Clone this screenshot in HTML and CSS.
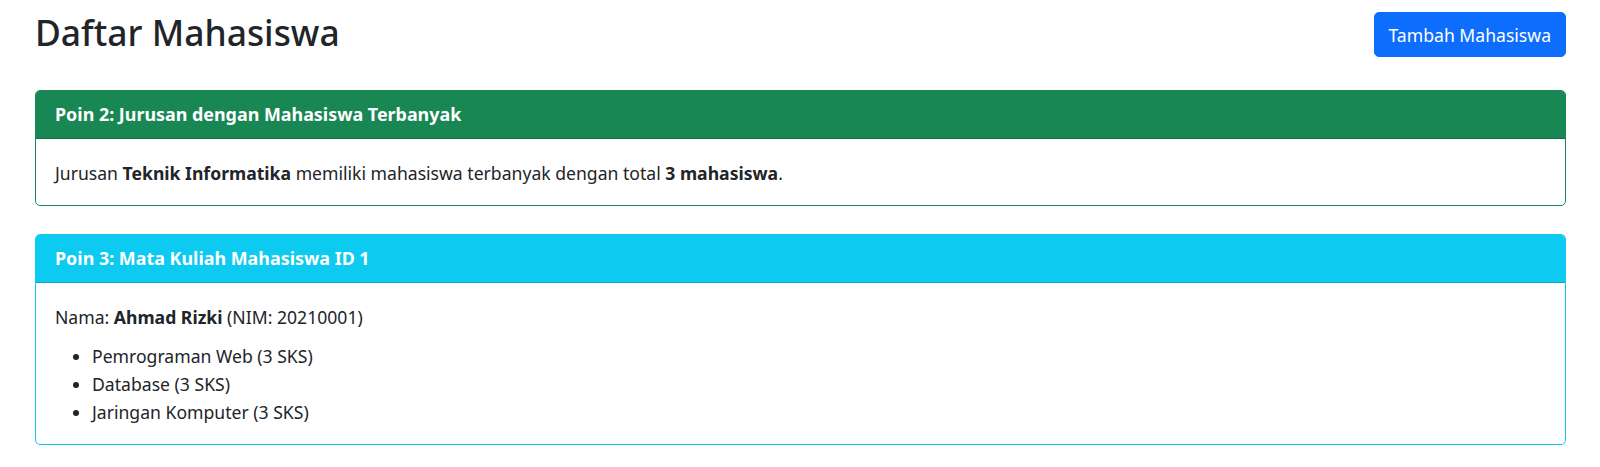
FILE: index.html
```html
<!DOCTYPE html>
<html lang="id">
<head>
    <meta charset="UTF-8">
    <meta name="viewport" content="width=device-width, initial-scale=1.0">
    <title>Daftar Mahasiswa</title>
    <link rel="stylesheet" href="styles.css">
</head>
<body>

<div class="container">
    <div class="topbar">
        <h2 class="page-title">Daftar Mahasiswa</h2>
        <button type="button" class="btn-primary">Tambah Mahasiswa</button>
    </div>

    <div class="card card-success">
        <div class="card-header">Poin 2: Jurusan dengan Mahasiswa Terbanyak</div>
        <div class="card-body">
            <p class="mb-0">Jurusan <strong>Teknik Informatika</strong> memiliki mahasiswa terbanyak dengan total <strong>3 mahasiswa</strong>.</p>
        </div>
    </div>

    <div class="card card-info">
        <div class="card-header">Poin 3: Mata Kuliah Mahasiswa ID 1</div>
        <div class="card-body">
            <p class="student">Nama: <strong>Ahmad Rizki</strong> (NIM: 20210001)</p>
            <ul class="course-list">
                <li>Pemrograman Web (3 SKS)</li>
                <li>Database (3 SKS)</li>
                <li>Jaringan Komputer (3 SKS)</li>
            </ul>
        </div>
    </div>
</div>

</body>
</html>
```
FILE: styles.css
```css
body {
    font-family: "Noto Sans", "Open Sans", sans-serif;
    font-size: 17.6px;
    line-height: 28px;
    color: #212529;
    background-color: #fff;
    margin: 0;
    padding: 0;
}
.container {
    padding: 0 34px 0 35px;
}
.topbar {
    display: flex;
    justify-content: space-between;
    align-items: center;
    height: 45px;
    margin-top: 12px;
    margin-bottom: 33px;
}
.page-title {
    font-size: 35.4px;
    font-weight: 500;
    line-height: 42px;
    margin: 0 0 6px;
}
.btn-primary {
    font-family: inherit;
    font-size: 17.6px;
    line-height: 28px;
    height: 45px;
    padding: 0 14px;
    color: #fff;
    background-color: #0d6efd;
    border: 1px solid #0d6efd;
    border-radius: 5px;
    cursor: pointer;
}
.btn-primary:hover {
    background-color: #0b5ed7;
}
.card {
    border: 1px solid;
    border-radius: 5px;
    margin-bottom: 28px;
    overflow: hidden;
    background-color: #fff;
}
.card-header {
    padding: 9px 19px;
    line-height: 29px;
    font-size: 17.9px;
    font-weight: 700;
    color: #fff;
    border-bottom: 1px solid rgba(0, 0, 0, 0.175);
}
.card-body {
    padding: 20px 19px 18px;
}
.card-success {
    border-color: #198754;
}
.card-success .card-header {
    background-color: #198754;
}
.card-info {
    border-color: #0dcaf0;
}
.card-info .card-header {
    background-color: #0dcaf0;
}
.mb-0 {
    margin: 0;
}
.student {
    margin: 0 0 11px;
}
.course-list {
    margin: 0;
    padding-left: 37px;
}
strong {
    font-weight: 700;
}
```
